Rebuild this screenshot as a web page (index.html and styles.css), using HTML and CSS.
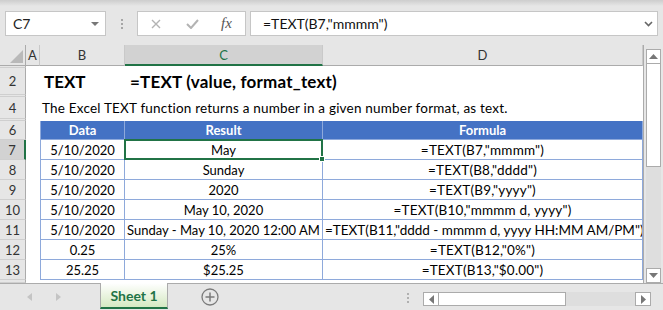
FILE: index.html
```html
<!DOCTYPE html>
<html lang="en">
<head>
    <meta charset="UTF-8">
    <title>TEXT function - Excel</title>
    <link rel="stylesheet" href="styles.css">
</head>
<body>
    <div class="app">
        <div class="formula-bar">
            <div class="name-box">
                <span>C7</span>
                <span class="caret"></span>
            </div>
            <div class="grip"></div>
            <div class="fx-box">
                <svg class="icon-cancel" width="10" height="10" viewBox="0 0 10 10">
                    <path d="M1 1 L9 9 M9 1 L1 9" stroke="#b3b3b3" stroke-width="1.4" fill="none"/>
                </svg>
                <svg class="icon-enter" width="13" height="10" viewBox="0 0 13 10">
                    <path d="M1 5 L5 9 L12 1" stroke="#b3b3b3" stroke-width="2" fill="none"/>
                </svg>
                <span class="fx">fx</span>
            </div>
            <div class="formula-input">
                <span>=TEXT(B7,"mmmm")</span>
                <svg class="chevron" width="9" height="6" viewBox="0 0 9 6">
                    <path d="M1 1 L4.5 4.5 L8 1" stroke="#666" stroke-width="1.6" fill="none"/>
                </svg>
            </div>
        </div>

        <div class="sheet">
            <div class="grid">
                <!-- column headers -->
                <div class="corner">
                    <svg width="26" height="21" viewBox="0 0 26 21">
                        <polygon points="10,18 23,18 23,5" fill="#b9b9b9"/>
                    </svg>
                </div>
                <div class="hd">A</div>
                <div class="hd">B</div>
                <div class="hd sel">C</div>
                <div class="hd">D</div>

                <!-- row 1 (hidden) -->
                <div class="rh"></div>
                <div class="blank"></div>

                <!-- row 2 -->
                <div class="rh">2</div>
                <div></div>
                <div class="title-name">TEXT</div>
                <div class="title-syntax">=TEXT (value, format_text)</div>

                <!-- row 3 (hidden) -->
                <div class="rh"></div>
                <div class="blank"></div>

                <!-- row 4 -->
                <div class="rh">4</div>
                <div></div>
                <div class="description">The Excel TEXT function returns a number in a given number format, as text.</div>

                <!-- row 5 (hidden) -->
                <div class="rh"></div>
                <div class="blank"></div>

                <!-- row 6 -->
                <div class="rh">6</div>
                <div></div>
                <div class="th first">Data</div>
                <div class="th">Result</div>
                <div class="th">Formula</div>

                <!-- row 7 -->
                <div class="rh sel">7</div>
                <div></div>
                <div class="td first">5/10/2020</div>
                <div class="td active">May<span class="sel-box"><span class="handle"></span></span></div>
                <div class="td f"><span>=TEXT(B7,"mmmm")</span></div>

                <!-- row 8 -->
                <div class="rh">8</div>
                <div></div>
                <div class="td first">5/10/2020</div>
                <div class="td">Sunday</div>
                <div class="td f"><span>=TEXT(B8,"dddd")</span></div>

                <!-- row 9 -->
                <div class="rh">9</div>
                <div></div>
                <div class="td first">5/10/2020</div>
                <div class="td">2020</div>
                <div class="td f"><span>=TEXT(B9,"yyyy")</span></div>

                <!-- row 10 -->
                <div class="rh">10</div>
                <div></div>
                <div class="td first">5/10/2020</div>
                <div class="td">May 10, 2020</div>
                <div class="td f"><span>=TEXT(B10,"mmmm d, yyyy")</span></div>

                <!-- row 11 -->
                <div class="rh">11</div>
                <div></div>
                <div class="td first">5/10/2020</div>
                <div class="td">Sunday - May 10, 2020 12:00 AM</div>
                <div class="td f long"><span>=TEXT(B11,"dddd - mmmm d, yyyy HH:MM AM/PM")</span></div>

                <!-- row 12 -->
                <div class="rh">12</div>
                <div></div>
                <div class="td first">0.25</div>
                <div class="td">25%</div>
                <div class="td f"><span>=TEXT(B12,"0%")</span></div>

                <!-- row 13 -->
                <div class="rh">13</div>
                <div></div>
                <div class="td first">25.25</div>
                <div class="td">$25.25</div>
                <div class="td f"><span>=TEXT(B13,"$0.00")</span></div>

                <!-- row 14 (cut off) -->
                <div class="rh"></div>
                <div class="blank"></div>
            </div>

            <div class="vscroll">
                <div class="sb-btn">
                    <svg width="9" height="5" viewBox="0 0 9 5"><polygon points="0,5 9,5 4.5,0" fill="#777"/></svg>
                </div>
                <div class="sb-thumb v"></div>
                <div class="sb-track"></div>
                <div class="sb-btn">
                    <svg width="9" height="5" viewBox="0 0 9 5"><polygon points="0,0 9,0 4.5,5" fill="#777"/></svg>
                </div>
            </div>
        </div>

        <div class="tabbar">
            <div class="tab-nav">
                <svg width="5" height="8" viewBox="0 0 5 8"><polygon points="5,0 5,8 0,4" fill="#c4c4c4"/></svg>
                <svg width="5" height="8" viewBox="0 0 5 8"><polygon points="0,0 0,8 5,4" fill="#c4c4c4"/></svg>
            </div>
            <div class="tab">Sheet 1</div>
            <div class="add-sheet">
                <svg width="18" height="18" viewBox="0 0 18 18">
                    <circle cx="9" cy="9" r="8" stroke="#7b7b7b" stroke-width="1.3" fill="none"/>
                    <path d="M9 4.5 V13.5 M4.5 9 H13.5" stroke="#7b7b7b" stroke-width="1.5"/>
                </svg>
            </div>
            <div class="hgrip"></div>
            <div class="hscroll">
                <div class="sb-btn h">
                    <svg width="5" height="9" viewBox="0 0 5 9"><polygon points="5,0 5,9 0,4.5" fill="#777"/></svg>
                </div>
                <div class="sb-thumb h"></div>
                <div class="sb-track"></div>
                <div class="sb-btn h">
                    <svg width="5" height="9" viewBox="0 0 5 9"><polygon points="0,0 0,9 5,4.5" fill="#777"/></svg>
                </div>
            </div>
        </div>
    </div>
</body>
</html>
```

FILE: styles.css
```css
* {
    box-sizing: border-box;
}

body {
    margin: 0;
    padding: 0;
    background: #e6e6e6;
}

.app {
    width: 663px;
    height: 310px;
    display: flex;
    flex-direction: column;
    overflow: hidden;
    background: #e6e6e6;
    font-family: Lato, "Open Sans", sans-serif;
    color: #000;
}

/* formula bar */

.formula-bar {
    height: 45px;
    flex: none;
    display: flex;
    align-items: flex-start;
    padding-top: 11px;
    background: linear-gradient(to bottom, #cdcdcd, #e6e6e6 6px);
}

.name-box {
    margin-left: 5px;
    width: 101px;
    height: 25px;
    border: 1px solid #c6c6c6;
    background: #fff;
    display: flex;
    align-items: center;
    padding-left: 7px;
    font-size: 14px;
    color: #222;
}

.caret {
    margin-left: auto;
    margin-right: 6px;
    border-left: 4px solid transparent;
    border-right: 4px solid transparent;
    border-top: 4px solid #777;
}

.grip {
    width: 2px;
    height: 10px;
    margin: 8px 0 0 15px;
    background: repeating-linear-gradient(to bottom, #a6a6a6 0 2px, transparent 2px 4px);
}

.fx-box {
    margin-left: 14px;
    width: 109px;
    height: 25px;
    border: 1px solid #c6c6c6;
    background: #fff;
    display: flex;
    align-items: center;
    padding-left: 13px;
}

.icon-enter {
    margin-left: 25px;
}

.fx {
    margin-left: 22px;
    font-family: "Liberation Serif", serif;
    font-style: italic;
    font-size: 15px;
    color: #555;
}

.formula-input {
    margin-left: 4px;
    width: 408px;
    height: 25px;
    border: 1px solid #c6c6c6;
    background: #fff;
    display: flex;
    align-items: center;
    padding-left: 12px;
    font-size: 14px;
    color: #111;
}

.chevron {
    margin-left: auto;
    margin-right: 4px;
}

/* sheet */

.sheet {
    height: 238px;
    flex: none;
    display: flex;
}

.grid {
    display: grid;
    grid-template-columns: 26px 14px 85px 198px 320px;
    grid-template-rows: 21px 2px 27px 2px 22px 2px 19px repeat(7, 20px) 3px;
    background: #fff;
    border-right: 1px solid #ababab;
    font-size: 13px;
    overflow: hidden;
}

.corner {
    background: #e6e6e6;
    border-right: 1px solid #ababab;
    border-bottom: 1px solid #ababab;
}

.corner svg {
    display: block;
}

.hd {
    background: #e6e6e6;
    border-right: 1px solid #c9c9c9;
    border-bottom: 1px solid #ababab;
    display: flex;
    align-items: center;
    justify-content: center;
    color: #333;
}

.hd.sel {
    background: #d2d2d2;
    border-bottom: 2px solid #217346;
    color: #217346;
}

.rh {
    background: #e6e6e6;
    border-right: 1px solid #ababab;
    border-bottom: 1px solid #cfcfcf;
    display: flex;
    align-items: center;
    justify-content: center;
    color: #333;
}

.rh.sel {
    background: #d2d2d2;
    border-right: 2px solid #217346;
}

.blank {
    grid-column: span 4;
}

.title-name {
    font-size: 17px;
    font-weight: bold;
    display: flex;
    align-items: center;
    padding-left: 4px;
}

.title-syntax {
    grid-column: span 2;
    font-size: 17px;
    font-weight: bold;
    letter-spacing: 0.2px;
    display: flex;
    align-items: center;
    padding-left: 5px;
    white-space: nowrap;
}

.description {
    grid-column: span 3;
    display: flex;
    align-items: center;
    padding-left: 2px;
    font-size: 13.5px;
    letter-spacing: 0.2px;
    white-space: nowrap;
}

.th,
.td {
    display: flex;
    align-items: center;
    justify-content: center;
    white-space: nowrap;
    overflow: hidden;
    border-right: 1px solid #8ea9db;
    border-bottom: 1px solid #8ea9db;
}

.th {
    background: #4472c4;
    color: #fff;
    font-weight: bold;
}

.th.first,
.td.first {
    border-left: 1px solid #8ea9db;
}

.td span {
    flex: none;
}

.td.f {
    font-size: 13.5px;
    letter-spacing: 0.2px;
}

.td.long {
    justify-content: flex-start;
    padding-left: 2px;
    letter-spacing: 0;
}

.td.active {
    position: relative;
    overflow: visible;
}

.sel-box {
    position: absolute;
    left: -1px;
    top: -1px;
    right: -1px;
    bottom: -1px;
    border: 2px solid #217346;
}

.handle {
    position: absolute;
    right: -4px;
    bottom: -4px;
    width: 6px;
    height: 6px;
    background: #217346;
    border: 1px solid #fff;
}

/* scrollbars */

.vscroll {
    width: 19px;
    display: flex;
    flex-direction: column;
    padding: 4px 2px 0 2px;
}

.sb-btn {
    flex: none;
    width: 15px;
    height: 15px;
    background: #fff;
    border: 1px solid #ababab;
    display: flex;
    align-items: center;
    justify-content: center;
}

.sb-thumb.v {
    height: 103px;
    background: #fff;
    border: 1px solid #ababab;
    border-top: none;
}

.sb-track {
    flex: 1;
    background: #dedede;
}

/* sheet tabs */

.tabbar {
    flex: 1;
    display: flex;
    align-items: flex-start;
    border-top: 1px solid #ababab;
}

.tab-nav {
    width: 100px;
    height: 26px;
    display: flex;
    align-items: center;
    gap: 24px;
    padding-left: 27px;
}

.tab {
    width: 68px;
    height: 26px;
    margin-top: -1px;
    border-left: 1px solid #ababab;
    border-right: 1px solid #ababab;
    border-bottom: 2px solid #217346;
    background: linear-gradient(to bottom, #ffffff, #d5e9c2);
    display: flex;
    align-items: center;
    justify-content: center;
    font-size: 14px;
    font-weight: bold;
    color: #217346;
}

.add-sheet {
    margin-left: 33px;
    height: 26px;
    display: flex;
    align-items: center;
}

.hgrip {
    width: 2px;
    height: 10px;
    margin: 9px 0 0 188px;
    background: repeating-linear-gradient(to bottom, #b0b0b0 0 2px, transparent 2px 4px);
}

.hscroll {
    margin: 8px 0 0 14px;
    width: 228px;
    height: 14px;
    display: flex;
}

.sb-btn.h {
    width: 16px;
    height: 14px;
}

.sb-thumb.h {
    width: 127px;
    background: #fff;
    border: 1px solid #ababab;
    border-left: none;
}
```
